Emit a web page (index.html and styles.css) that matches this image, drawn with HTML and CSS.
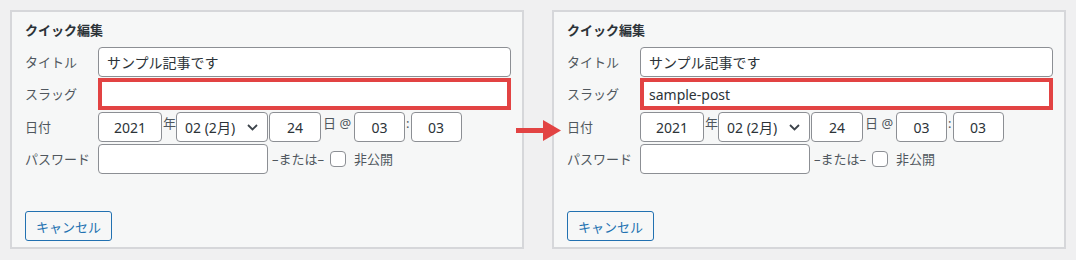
FILE: index.html
```html
<!DOCTYPE html>
<html lang="ja">
<head>
<meta charset="utf-8">
<title>クイック編集</title>
<link rel="stylesheet" href="styles.css">
</head>
<body>
<div class="stage">
  <section class="panel">
    <h2 class="heading">クイック編集</h2>
    <div class="row">
      <span class="label">タイトル</span>
      <input class="field field-wide" type="text" value="サンプル記事です">
    </div>
    <div class="row row-slug">
      <span class="label">スラッグ</span>
      <input class="field field-wide field-hl" type="text" value="">
    </div>
    <div class="row row-date">
      <span class="label">日付</span>
      <input class="field f-year center" type="text" value="2021">
      <span class="sep sep-year">年</span>
      <div class="field f-month"><span>02 (2月)</span><svg class="chev" width="11" height="7" viewBox="0 0 11 7"><path d="M1 1 L5.5 5.5 L10 1" fill="none" stroke="#3c434a" stroke-width="1.8"/></svg></div>
      <input class="field f-day center" type="text" value="24">
      <span class="sep sep-day">日 @</span>
      <input class="field f-time center" type="text" value="03">
      <span class="sep sep-colon">:</span>
      <input class="field f-time center" type="text" value="03">
    </div>
    <div class="row row-pass">
      <span class="label">パスワード</span>
      <input class="field f-pass" type="text" value="">
      <span class="or">–または–</span>
      <span class="check"></span>
      <span class="private">非公開</span>
    </div>
    <div class="actions">
      <button class="btn" type="button">キャンセル</button>
    </div>
  </section>
  <section class="panel">
    <h2 class="heading">クイック編集</h2>
    <div class="row">
      <span class="label">タイトル</span>
      <input class="field field-wide" type="text" value="サンプル記事です">
    </div>
    <div class="row row-slug">
      <span class="label">スラッグ</span>
      <input class="field field-wide field-hl" type="text" value="sample-post">
    </div>
    <div class="row row-date">
      <span class="label">日付</span>
      <input class="field f-year center" type="text" value="2021">
      <span class="sep sep-year">年</span>
      <div class="field f-month"><span>02 (2月)</span><svg class="chev" width="11" height="7" viewBox="0 0 11 7"><path d="M1 1 L5.5 5.5 L10 1" fill="none" stroke="#3c434a" stroke-width="1.8"/></svg></div>
      <input class="field f-day center" type="text" value="24">
      <span class="sep sep-day">日 @</span>
      <input class="field f-time center" type="text" value="03">
      <span class="sep sep-colon">:</span>
      <input class="field f-time center" type="text" value="03">
    </div>
    <div class="row row-pass">
      <span class="label">パスワード</span>
      <input class="field f-pass" type="text" value="">
      <span class="or">–または–</span>
      <span class="check"></span>
      <span class="private">非公開</span>
    </div>
    <div class="actions">
      <button class="btn" type="button">キャンセル</button>
    </div>
  </section>
  <svg class="arrow" width="46" height="24" viewBox="0 0 46 24">
    <rect x="0" y="8" width="30" height="5" fill="#e24343"/>
    <polygon points="27,0 45,10.5 27,21" fill="#e24343"/>
  </svg>
</div>
</body>
</html>
```

FILE: styles.css
```css
* { box-sizing: border-box; }
html, body { margin: 0; padding: 0; }
body {
  background: #f0f0f1;
  font-family: "Noto Sans", "Noto Sans CJK JP", sans-serif;
  font-size: 13px;
  color: #50575e;
}
.stage {
  position: relative;
  display: flex;
  gap: 28px;
  padding: 10px;
  width: 1076px;
  height: 260px;
}
.panel {
  width: 514px;
  height: 239px;
  border: 2px solid #d6d7da;
  background: #f6f7f7;
  padding: 8px 11px 6px 13px;
  display: flex;
  flex-direction: column;
}
.heading {
  margin: 0 0 7px;
  font-size: 13px;
  line-height: 20px;
  font-weight: 700;
  color: #2c3338;
}
.row {
  display: flex;
  align-items: center;
  height: 30px;
}
.row-slug { height: 32px; margin-top: 1px; }
.row-date { margin-top: 2px; }
.row-pass { margin-top: 2px; }
.label {
  width: 73px;
  flex: none;
  line-height: 18px;
  color: #50575e;
}
.field {
  height: 30px;
  border: 1px solid #8c8f94;
  border-radius: 4px;
  background: #fff;
  font-family: "Noto Sans", "Noto Sans CJK JP", sans-serif;
  font-size: 14px;
  color: #2c3338;
  padding: 0 8px;
  margin: 0;
  outline: none;
}
.field-wide { width: 413px; }
.field-hl {
  height: 32px;
  border: 4px solid #e24343;
  border-radius: 0;
  padding: 0 5px;
}
.center { text-align: center; }
.f-year { width: 64px; }
.f-month {
  width: 92px;
  display: flex;
  align-items: center;
  justify-content: space-between;
  padding: 0 9px 0 8px;
  margin-right: 1px;
}
.chev { display: block; }
.f-day { width: 52px; }
.f-time { width: 51px; }
.sep { line-height: 18px; color: #50575e; align-self: flex-start; margin-top: 2px; }
.sep-year { margin-left: 1px; }
.sep-day { margin: 2px 3px 0 2px; }
.sep-colon { margin: 2px 1px 0 1px; }
.f-pass { width: 170px; }
.or { margin-left: 4px; line-height: 18px; }
.check {
  width: 16px;
  height: 16px;
  border: 1px solid #8c8f94;
  border-radius: 4px;
  background: #fff;
  margin-left: 6px;
}
.private { margin-left: 8px; line-height: 18px; }
.actions {
  margin-top: auto;
  display: flex;
}
.btn {
  height: 30px;
  width: 87px;
  padding: 0;
  border: 1px solid #2271b1;
  border-radius: 3px;
  background: #f6f7f7;
  color: #2271b1;
  font-family: "Noto Sans", "Noto Sans CJK JP", sans-serif;
  font-size: 13px;
}
.arrow {
  position: absolute;
  left: 516px;
  top: 120px;
}
```
